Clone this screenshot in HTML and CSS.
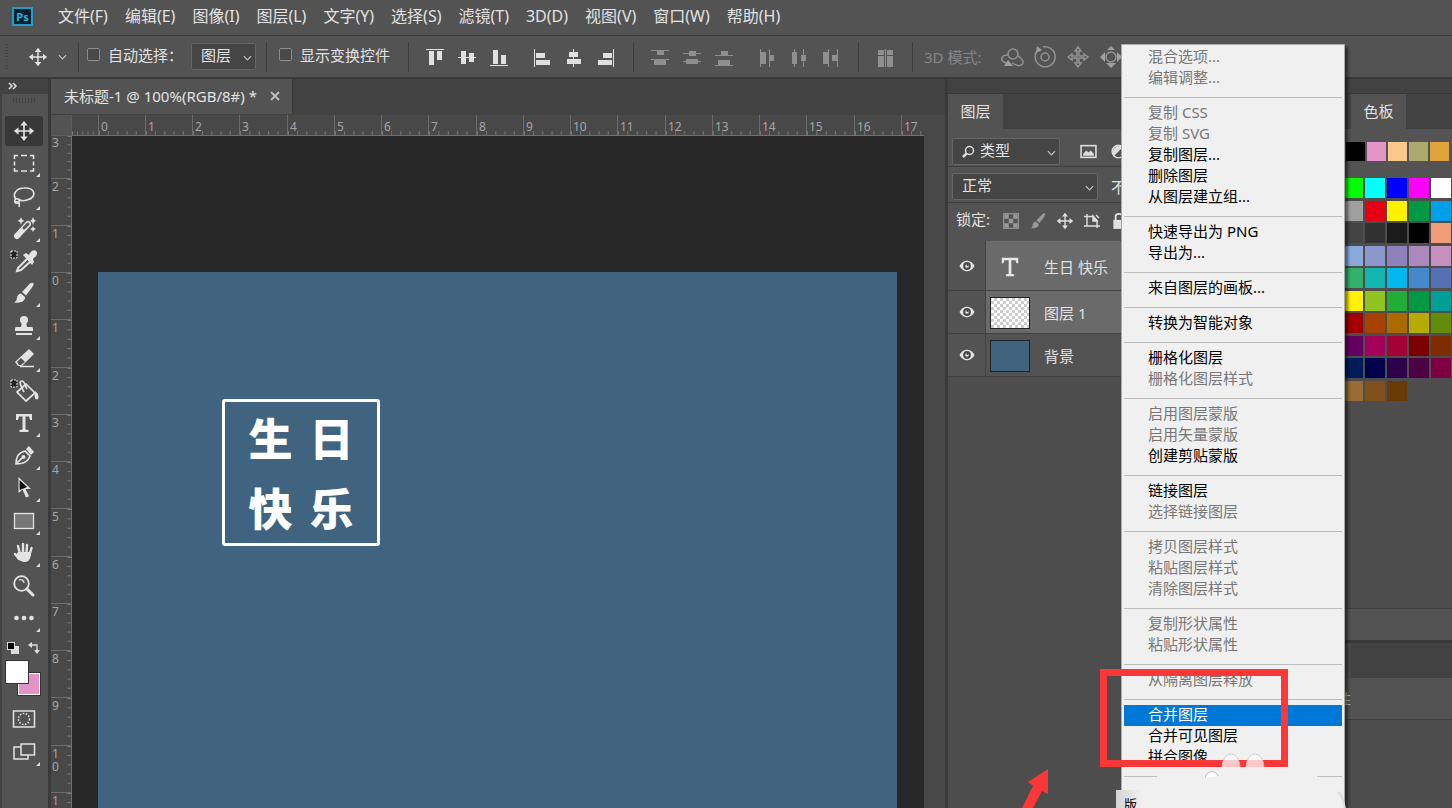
FILE: index.html
```html
<!DOCTYPE html>
<html lang="zh-CN">
<head>
<meta charset="utf-8">
<title>未标题-1</title>
<link rel="stylesheet" href="styles.css">
</head>
<body>
<svg class="defs" aria-hidden="true">
  <symbol id="move" viewBox="0 0 24 24"><path d="M12 4v16M4 12h16" stroke="currentColor" stroke-width="1.800"/><path d="M12 1l4 5h-8zM12 23l4-5h-8zM1 12l5-4v8zM23 12l-5-4v8z" fill="currentColor"/></symbol>
  <symbol id="chev" viewBox="0 0 10 6"><path d="M1 1l4 4 4-4" fill="none" stroke="currentColor" stroke-width="1.300"/></symbol>
  <symbol id="eye" viewBox="0 0 16 12"><path d="M.5 6C3 1.500 6 .8 8 .8s5 .7 7.500 5.200C13 10.500 10 11.200 8 11.200S3 10.500.5 6z" fill="#e6e6e6"/><circle cx="8" cy="6" r="3.900" fill="#4a4a4a"/><circle cx="8" cy="6" r="1.800" fill="#e6e6e6"/><circle cx="8.500" cy="5" r="1" fill="#333"/></symbol>
  <symbol id="brush" viewBox="0 0 24 24"><path d="M21 2c1.500 1 0 3-1 4.500l-6 8-4-3.500 7-7.500c1.200-1.200 3-2.300 4-1.500z" fill="currentColor"/><path d="M9 12.500l4 3.500c.5 4-4 6.500-11 5.500 3-1.500 2.500-3 3-5 .5-2 2-4 4-4z" fill="currentColor"/></symbol>
</svg>
<div class="app">
  <header class="menubar">
    <div class="logo">Ps</div>
    <nav class="menus" aria-label="主菜单">
      <button>文件(F)</button><button>编辑(E)</button><button>图像(I)</button><button>图层(L)</button><button>文字(Y)</button><button>选择(S)</button><button>滤镜(T)</button><button>3D(D)</button><button>视图(V)</button><button>窗口(W)</button><button>帮助(H)</button>
    </nav>
  </header>

  <div class="options">
    <span class="grip-v"></span>
    <button class="preset" aria-label="移动工具"><svg class="i20"><use href="#move"/></svg><svg class="chev"><use href="#chev"/></svg></button>
    <span class="divider"></span>
    <label class="check auto"><input type="checkbox">自动选择：</label>
    <span class="pick pick-small"><select aria-label="自动选择"><option>图层</option></select><svg class="chev"><use href="#chev"/></svg></span>
    <span class="divider"></span>
    <label class="check"><input type="checkbox">显示变换控件</label>
    <span class="divider"></span>
    <div class="aligns">
      <button aria-label="顶对齐"><svg viewBox="0 0 18 18"><path d="M0 0h18v1H0zM3 2h5v14H3zM11 2h5v9h-5z"/></svg></button>
      <button aria-label="垂直居中对齐"><svg viewBox="0 0 18 18"><path d="M0 8h18v1H0zM3 2h5v13H3zM11 4h5v9h-5z"/></svg></button>
      <button aria-label="底对齐"><svg viewBox="0 0 18 18"><path d="M0 16h18v1H0zM3 1h5v14H3zM11 6h5v9h-5z"/></svg></button>
    </div>
    <div class="aligns">
      <button aria-label="左对齐"><svg viewBox="0 0 18 18"><path d="M1 0h1v18H1zM3 4h9v5H3zM3 11h14v5H3z"/></svg></button>
      <button aria-label="水平居中对齐"><svg viewBox="0 0 18 18"><path d="M8 0h1v18H8zM4 3h9v5H4zM2 10h14v5H2z"/></svg></button>
      <button aria-label="右对齐"><svg viewBox="0 0 18 18"><path d="M16 0h1v18h-1zM6 4h9v5H6zM1 11h14v5H1z"/></svg></button>
    </div>
    <span class="divider"></span>
    <div class="aligns dim">
      <button aria-label="按顶分布"><svg viewBox="0 0 18 18"><path d="M0 1h18v1H0zM0 10h18v1H0zM6 2h7v4H6zM3 11h12v5H3z"/></svg></button>
      <button aria-label="垂直居中分布"><svg viewBox="0 0 18 18"><path d="M0 4h18v1H0zM0 12h18v1H0zM6 2h7v5H6zM3 10h12v5H3z"/></svg></button>
      <button aria-label="按底分布"><svg viewBox="0 0 18 18"><path d="M0 6h18v1H0zM0 16h18v1H0zM6 2h7v5H6zM3 11h12v5H3z"/></svg></button>
    </div>
    <div class="aligns dim">
      <button aria-label="按左分布"><svg viewBox="0 0 18 18"><path d="M2 0h1v18H2zM11 0h1v18h-1zM3 3h5v12H3zM12 6h4v6h-4z"/></svg></button>
      <button aria-label="水平居中分布"><svg viewBox="0 0 18 18"><path d="M4 0h1v18H4zM13 0h1v18h-1zM2 3h5v12H2zM11 6h5v6h-5z"/></svg></button>
      <button aria-label="按右分布"><svg viewBox="0 0 18 18"><path d="M6 0h1v18H6zM15 0h1v18h-1zM1 3h5v12H1zM10 6h5v6h-5z"/></svg></button>
    </div>
    <span class="divider"></span>
    <div class="aligns dim">
      <button aria-label="自动对齐"><svg viewBox="0 0 18 18"><path d="M2 1h6v5H2zM2 7h6v11H2zM9 0h1v18H9zM11 1h6v5h-6zM11 7h6v11h-6z"/></svg></button>
    </div>
    <span class="divider"></span>
    <span class="mode">3D 模式:</span>
    <div class="modes">
      <button aria-label="旋转"><svg viewBox="0 0 24 24"><circle cx="13" cy="9" r="5"/><path d="M8 10c-8 0-8 6-2 8M12 18c6 4 12 3 11-2-1-2-3-4-5-5"/><path class="f" d="M4 21l4-6 5 6z"/></svg></button>
      <button aria-label="滚动"><svg viewBox="0 0 24 24"><circle cx="12" cy="12" r="4"/><path d="M4 6a10 10 0 1 0 6-4"/><path class="f" d="M3 8l1-7 5 4z"/></svg></button>
      <button aria-label="拖动"><svg viewBox="0 0 24 24"><path d="M12 2l3 4h-2v5h5V9l4 3-4 3v-2h-5v5h2l-3 4-3-4h2v-5H6v2l-4-3 4-3v2h5V6H9z"/></svg></button>
      <button aria-label="滑动"><svg viewBox="0 0 24 24"><circle cx="12" cy="12" r="5"/><path class="f" d="M12 1l4 4H8zM12 23l5-5H7zM1 12l5-5v10zM23 12l-5-5v10z"/></svg></button>
    </div>
  </div>

  <main class="work">
    <aside class="tools">
      <div class="tools-head"><svg viewBox="0 0 10 8"><path d="M1 1l3 3-3 3M5 1l3 3-3 3" fill="none" stroke="#ddd" stroke-width="1.600"/></svg></div>
      <div class="grip-h"></div>
      <div class="tool-list">
        <button class="tool on" aria-label="移动"><svg><use href="#move"/></svg></button>
        <button class="tool more" aria-label="矩形选框"><svg viewBox="0 0 24 24"><path d="M2.500 8V4.500H6M9 4.500h6M18 4.500h3.500V8M21.500 10.500v4M21.500 17v3H18M15 20H9M6 20H2.500v-3M2.500 14.500v-4" fill="none" stroke="currentColor" stroke-width="1.600"/></svg></button>
        <button class="tool more" aria-label="套索"><svg viewBox="0 0 24 24" fill="none" stroke="currentColor" stroke-width="1.600"><path d="M4 15C0 11 4 4 12 4c12-1 13 10 3 12-3 1-6 1-8-.5"/><circle cx="5" cy="17" r="2.300"/><path d="M3 18c4-1 5 1 4 5"/></svg></button>
        <button class="tool more" aria-label="魔棒"><svg viewBox="0 0 24 24"><path d="M5 20L16 8" stroke="currentColor" stroke-width="6" stroke-linecap="round"/><path d="M12 12l4-4" stroke="#535353" stroke-width="3" stroke-linecap="round"/><path d="M9 1l1 2.500L12.500 5 10 6 9 9 8 6 5.500 5 8 3.500zM21 1l1 2.500L24 5l-2 1-1 3-1-3-2-1 2-1.500zM21 10l1 2 2 1-2 1-1 2-1-2-2-1 2-1z" fill="currentColor"/></svg></button>
        <button class="tool wide" aria-label="吸管"><svg viewBox="0 0 30 24"><path d="M2 2h6v7H2z" fill="#222" stroke="currentColor" stroke-dasharray="2 1"/><path d="M19 9L9 19l-1 3 4-1 10-9" fill="none" stroke="currentColor" stroke-width="2"/><path d="M14 6l3-2 3 2c2-6 8-6 8-2s-3 4-4 6l1 3-2 3z" fill="currentColor"/></svg></button>
        <button class="tool more" aria-label="画笔"><svg><use href="#brush"/></svg></button>
        <button class="tool more" aria-label="仿制图章"><svg viewBox="0 0 24 24" fill="currentColor"><circle cx="12" cy="6" r="4"/><path d="M10 8h4l1 5h5c1 0 1 1 1 4H3c0-3 0-4 1-4h5zM4 19h16v2H4z"/></svg></button>
        <button class="tool more" aria-label="橡皮擦"><svg viewBox="0 0 24 24"><path d="M3 16L17 3l5 5-12 12H6z" fill="currentColor"/><path d="M5 16l4-4 4 4-4 3H7z" fill="#535353"/><path d="M8 20.500h14" stroke="currentColor" stroke-width="1.500"/></svg></button>
        <button class="tool wide" aria-label="油漆桶"><svg viewBox="0 0 30 24"><path d="M2 1h6v7H2z" fill="#222" stroke="currentColor" stroke-dasharray="2 1"/><path d="M17 5l9 9-9 8-9-9zM15 13c-4-7-5-11-2-11s3 6 5 8" fill="none" stroke="currentColor" stroke-width="1.700"/><path d="M26 12c4 3 4 6 3 8-3 1-4-1-3-8z" fill="currentColor"/></svg></button>
        <button class="tool more" aria-label="文字"><svg viewBox="0 0 24 24"><path d="M4 3h16v6h-2l-1-3.500h-3.500v13l3 .5v2h-9v-2l3-.5v-13H7L6 9H4z" fill="currentColor"/></svg></button>
        <button class="tool more" aria-label="钢笔"><svg viewBox="0 0 24 24"><path d="M4 20c0-7 2-11 9-13l5 5c-2 6-6 8-14 8zM4 20l7-7" fill="none" stroke="currentColor" stroke-width="1.700"/><circle cx="11.500" cy="13" r="2" fill="currentColor"/><path d="M14 5l3-3 5 6-3 3z" fill="currentColor"/></svg></button>
        <button class="tool more" aria-label="路径选择"><svg viewBox="0 0 24 24"><path d="M6.500 1v16l4-3.500 3.500 8 3-1.200-3.500-7.300H19z" fill="currentColor"/><path d="M7.600 4v10l7.500-3z" fill="#111"/></svg></button>
        <button class="tool more" aria-label="矩形"><svg viewBox="0 0 24 24"><rect x="2.500" y="4.500" width="19" height="15" fill="#777" stroke="currentColor" stroke-width="1.300"/></svg></button>
        <button class="tool more" aria-label="抓手"><svg viewBox="0 0 24 24"><path d="M8 13L6 5M11 12V3M14.500 12l.5-8M17.500 14l2-7M7 18l-4-5" stroke="currentColor" stroke-width="2.400" stroke-linecap="round"/><path d="M6 11h13c0 6-2 10-6 10-4 0-7-2-9-7z" fill="currentColor"/></svg></button>
        <button class="tool" aria-label="缩放"><svg viewBox="0 0 24 24" fill="none" stroke="currentColor"><circle cx="9.500" cy="9.500" r="7.300" stroke-width="1.800"/><path d="M7 6c3-1 5 1 5 3" stroke-width="1.300"/><path d="M15 15l6 6" stroke-width="3" stroke-linecap="round"/></svg></button>
        <button class="tool more" aria-label="编辑工具栏"><svg viewBox="0 0 24 24" fill="currentColor"><circle cx="4.500" cy="12" r="2.300"/><circle cx="12" cy="12" r="2.300"/><circle cx="19.500" cy="12" r="2.300"/></svg></button>
      </div>
      <div class="mini">
        <button aria-label="默认颜色"><svg viewBox="0 0 14 14"><path d="M6 5h7v8H5V9h1z" fill="#ddd"/><rect x="1.500" y="1.500" width="7" height="7" fill="#000" stroke="#ddd"/></svg></button>
        <button aria-label="切换颜色"><svg viewBox="0 0 14 14"><path d="M3 4h7v7" fill="none" stroke="#ddd" stroke-width="1.300"/><path d="M1 4l4-3v6zM10 13l-3-4h6z" fill="#ddd"/></svg></button>
      </div>
      <div class="colors"><button class="bg" aria-label="背景色"></button><button class="fg" aria-label="前景色"></button></div>
      <button class="tool foot" aria-label="快速蒙版"><svg viewBox="0 0 24 24" fill="none" stroke="currentColor"><rect x="1.500" y="4" width="21" height="16" stroke-width="1.500"/><circle cx="12" cy="12" r="5.500" stroke-dasharray="1.500 1.500" stroke-width="1.500"/></svg></button>
      <button class="tool foot more" aria-label="屏幕模式"><svg viewBox="0 0 24 24" fill="none" stroke="currentColor" stroke-width="1.500"><path d="M9 7H2v12h14v-4"/><rect x="9" y="4" width="13.500" height="11"/></svg></button>
    </aside>

    <section class="doc">
      <div class="tabs"><div class="tab"><span>未标题-1 @ 100%(RGB/8#) *</span><button aria-label="关闭"><svg viewBox="0 0 10 10"><path d="M1 1l8 8M9 1L1 9" stroke="currentColor" stroke-width="2"/></svg></button></div></div>
      <div class="stage">
        <div class="corner"></div>
        <div class="ruler-x"><i></i><i>0</i><i>1</i><i>2</i><i>3</i><i>4</i><i>5</i><i>6</i><i>7</i><i>8</i><i>9</i><i>10</i><i>11</i><i>12</i><i>13</i><i>14</i><i>15</i><i>16</i><i>17</i></div>
        <div class="ruler-y"><i>3</i><i>2</i><i>1</i><i>0</i><i>1</i><i>2</i><i>3</i><i>4</i><i>5</i><i>6</i><i>7</i><i>8</i><i>9</i><i>1<br>0</i><i>1</i></div>
        <div class="pasteboard"><div class="artboard"><div class="stamp"><span>生</span><span>日</span><span>快</span><span>乐</span></div></div></div>
      </div>
    </section>

    <aside class="panels">
      <section class="layers">
        <div class="strip"></div>
        <div class="ptabs"><button class="ptab">图层</button></div>
        <div class="prow filter">
          <span class="pick pick-type"><svg class="lens" viewBox="0 0 14 14"><circle cx="8.500" cy="5.500" r="4" fill="none" stroke="#ddd" stroke-width="1.500"/><path d="M5.500 8.500L2 12" stroke="#ddd" stroke-width="2.500"/></svg><select aria-label="筛选类型"><option>类型</option></select><svg class="chev"><use href="#chev"/></svg></span>
          <button class="ic" aria-label="像素图层"><svg viewBox="0 0 16 14"><rect x="1" y="1.500" width="14" height="11" fill="none" stroke="#ddd" stroke-width="1.500"/><path d="M3 11V9l3-3 2 2 2-2 3 3v2z" fill="#ddd"/></svg></button>
          <button class="ic" aria-label="调整图层"><svg viewBox="0 0 16 14"><circle cx="8" cy="7" r="6" fill="none" stroke="#ddd" stroke-width="1.400"/><path d="M12.200 2.800a6 6 0 0 0-8.400 8.400z" fill="#ddd"/></svg></button>
        </div>
        <div class="prow blend">
          <span class="pick pick-blend"><select aria-label="混合模式"><option>正常</option></select><svg class="chev"><use href="#chev"/></svg></span>
          <span class="opacity">不透明度:</span>
        </div>
        <div class="lock"><span>锁定:</span>
          <button class="off" aria-label="锁定透明像素"><svg viewBox="0 0 16 16"><rect x="1.500" y="1.500" width="13" height="13" fill="none" stroke="currentColor"/><path d="M2 2h4v4H2zM10 2h4v4h-4zM6 6h4v4H6zM2 10h4v4H2zM10 10h4v4h-4z" fill="currentColor"/></svg></button>
          <button class="off" aria-label="锁定图像像素"><svg><use href="#brush"/></svg></button>
          <button aria-label="锁定位置"><svg><use href="#move"/></svg></button>
          <button aria-label="防止嵌套"><svg viewBox="0 0 18 16" fill="none" stroke="currentColor" stroke-width="1.400"><path d="M4 1v12M1 3.500h9l4 4V13M1 13h16M14 9v6M13 2l3 3"/><path d="M10 3v5h4z" fill="currentColor"/></svg></button>
          <button aria-label="锁定全部"><svg viewBox="0 0 16 16"><path d="M5 7V4c0-3 6-3 6 0v3" fill="none" stroke="currentColor" stroke-width="1.600"/><path d="M3 7h10v8H3z" fill="currentColor"/></svg></button>
        </div>
        <ul class="layer-list">
          <li class="layer tall sel"><button class="vis" aria-label="可见性"><svg><use href="#eye"/></svg></button><div class="body"><svg class="tee" viewBox="0 0 24 24"><path d="M3 2h18v6h-2l-1-3.500h-4.500v15l3 .5v2h-9v-2l3-.5v-15H6L5 8H3z" fill="#e6e6e6"/></svg><span>生日 快乐</span></div></li>
          <li class="layer sel"><button class="vis" aria-label="可见性"><svg><use href="#eye"/></svg></button><div class="body"><span class="thumb checker"></span><span>图层 1</span></div></li>
          <li class="layer"><button class="vis" aria-label="可见性"><svg><use href="#eye"/></svg></button><div class="body"><span class="thumb fill"></span><span>背景</span></div></li>
        </ul>
      </section>
      <section class="side">
        <div class="strip"></div>
        <div class="ptabs shift"><button class="ptab">色板</button></div>
        <div class="recent">
          <b style="background:#000"></b><b style="background:#e493c5"></b><b style="background:#fdc88b"></b><b style="background:#abab70"></b><b style="background:#e0a33e"></b>
        </div>
        <div class="swatches">
          <b style="background:#00ff00"></b><b style="background:#00ffff"></b><b style="background:#0000ff"></b><b style="background:#ff00ff"></b><b style="background:#fff"></b>
          <b style="background:#a0a0a0"></b><b style="background:#e60012"></b><b style="background:#fff100"></b><b style="background:#009944"></b><b style="background:#00a0e9"></b>
          <b style="background:#444"></b><b style="background:#313131"></b><b style="background:#1b1b1b"></b><b style="background:#000"></b><b style="background:#f19c79"></b>
          <b style="background:#88abda"></b><b style="background:#8c97cb"></b><b style="background:#8f82bc"></b><b style="background:#aa89bd"></b><b style="background:#c490bf"></b>
          <b style="background:#32b16c"></b><b style="background:#13b5b1"></b><b style="background:#00b7ee"></b><b style="background:#448aca"></b><b style="background:#556fb5"></b>
          <b style="background:#fff100"></b><b style="background:#8fc31f"></b><b style="background:#22ac38"></b><b style="background:#009944"></b><b style="background:#009e96"></b>
          <b style="background:#a40000"></b><b style="background:#a84200"></b><b style="background:#ac6a00"></b><b style="background:#b7aa00"></b><b style="background:#638c0b"></b>
          <b style="background:#64005f"></b><b style="background:#a4005b"></b><b style="background:#a40035"></b><b style="background:#7d0000"></b><b style="background:#7f2d00"></b>
          <b style="background:#001c58"></b><b style="background:#00004c"></b><b style="background:#2e004b"></b><b style="background:#4c0045"></b><b style="background:#7e0043"></b>
          <b style="background:#996c33"></b><b style="background:#81511c"></b><b style="background:#6a3906"></b>
        </div>
        <div class="side-foot"></div>
        <div class="ptabs props"></div>
        <div class="prop-title"><span>性</span></div>
      </section>
    </aside>
  </main>

  <div class="context" role="menu">
    <div class="group"><button disabled>混合选项...</button><button disabled>编辑调整...</button></div>
    <div class="group"><button disabled>复制 CSS</button><button disabled>复制 SVG</button><button>复制图层...</button><button>删除图层</button><button>从图层建立组...</button></div>
    <div class="group"><button>快速导出为 PNG</button><button>导出为...</button></div>
    <div class="group"><button>来自图层的画板...</button></div>
    <div class="group"><button>转换为智能对象</button></div>
    <div class="group"><button>栅格化图层</button><button disabled>栅格化图层样式</button></div>
    <div class="group"><button disabled>启用图层蒙版</button><button disabled>启用矢量蒙版</button><button>创建剪贴蒙版</button></div>
    <div class="group"><button>链接图层</button><button disabled>选择链接图层</button></div>
    <div class="group"><button disabled>拷贝图层样式</button><button disabled>粘贴图层样式</button><button disabled>清除图层样式</button></div>
    <div class="group"><button disabled>复制形状属性</button><button disabled>粘贴形状属性</button></div>
    <div class="group"><button disabled>从隔离图层释放</button></div>
    <div class="group"><button class="active">合并图层</button><button>合并可见图层</button><button>拼合图像</button></div>
    <div class="group last"></div>
  </div>
  <div class="note">版</div>
  <div class="marker"></div>
  <svg class="arrow" viewBox="0 0 28 40" aria-hidden="true"><path d="M27 1L7 14l5 4L1 40h11l9-17 6 3z" fill="#fb3838"/></svg>
  <svg class="paw" viewBox="0 0 210 56" aria-hidden="true"><g fill="#fff" fill-opacity=".72" stroke="#bbb" stroke-opacity=".7"><ellipse cx="81" cy="15" rx="9" ry="13"/><ellipse cx="105" cy="15" rx="9" ry="13"/></g><path d="M7 23h48l17-8h42l9 8 4 1 3-1h37v6H7z" fill="#f0f0f0"/><path d="M55 26c2-8 11-8 13-2" fill="#fff" stroke="#bbb"/><path d="M188 40c5 2 5 10 7 16" fill="none" stroke="#ddd" stroke-width="2"/></svg>
</div>
</body>
</html>
```
FILE: styles.css
```css
* { box-sizing: border-box; }
body { margin: 0; background: #535353; color: #e2e2e2; font: 15px/20px "Noto Sans", "Noto Sans CJK SC", sans-serif; }
button, select { font: inherit; color: inherit; background: none; border: 0; padding: 0; margin: 0; }
ul { list-style: none; margin: 0; padding: 0; }
svg { display: block; }
.defs { display: none; }
.app { position: relative; display: flex; flex-direction: column; height: 100vh; overflow: hidden; }

.menubar { display: flex; align-items: center; flex: none; height: 36px; padding: 0 12px 3px; border-bottom: 1px solid #3c3c3c; }
.logo { width: 21px; height: 19px; border: 2px solid #1c9fcb; background: #04202e; color: #27b7ea; font: bold 11px/15px "Noto Sans", sans-serif; text-align: center; }
.menus { display: flex; gap: 17px; margin-left: 25px; font-size: 16px; white-space: nowrap; }

.options { display: flex; align-items: center; flex: none; height: 43px; border-bottom: 2px solid #393939; white-space: nowrap; }
.grip-v { width: 3px; height: 26px; margin-left: 5px; background: repeating-linear-gradient(#444 0 1px, transparent 1px 3px); }
.preset { display: flex; align-items: center; gap: 10px; margin-left: 20px; width: 50px; }
.i20 { width: 20px; height: 20px; }
.chev { width: 9px; height: 6px; color: #c4c4c4; flex: none; }
.divider { width: 1px; height: 30px; background: #3d3d3d; flex: none; }
.check { display: flex; align-items: center; gap: 8px; margin: 0 18px 4px 12px; }
.check.auto { margin: 0 8px 4px; width: 96px; }
.check input { appearance: none; width: 13px; height: 13px; margin: 0; border: 1px solid #8b8b8b; border-radius: 2px; background: #484848; }
.pick { position: relative; display: flex; align-items: center; background: #454545; border: 1px solid #666; border-radius: 2px; }
.pick select { appearance: none; width: 100%; height: 100%; padding: 0 9px 3px; outline: 0; }
.pick .chev { position: absolute; right: 3px; top: 11px; pointer-events: none; }
.pick-small { width: 65px; height: 27px; margin-right: 10px; }
.aligns { display: flex; gap: 14px; margin: 2px 0 0 17px; }
.aligns + .aligns { margin-left: 25px; }
.aligns + .divider { margin-left: 18px; }
.aligns svg { width: 18px; height: 18px; fill: #e0e0e0; }
.dim svg { fill: #8f8f8f; }
.mode { margin-left: 11px; color: #858585; }
.modes { display: flex; gap: 9px; margin-left: 19px; }
.modes svg { width: 24px; height: 24px; fill: none; stroke: #929292; stroke-width: 1.5; }
.modes .f { fill: #a0a0a0; stroke: none; }

.work { display: flex; flex: 1; min-height: 0; }
.tools { display: flex; flex-direction: column; flex: none; width: 51px; border-left: 2px solid #424242; border-right: 3px solid #3a3a3a; overflow: hidden; }
.tools-head { flex: none; height: 15px; padding: 3px 0 0 6px; background: #424242; }
.tools-head svg { width: 10px; height: 8px; }
.grip-h { flex: none; width: 23px; height: 5px; margin: 4px 0 13px 11px; background: repeating-linear-gradient(90deg, #414141 0 1px, transparent 1px 3px); }
.tool-list { display: grid; flex: none; grid-auto-rows: 32px 33px; }
.tool { position: relative; display: grid; place-items: center; width: 38px; height: 30px; margin-left: 3px; color: #e3e3e3; }
.tool svg { width: 24px; height: 24px; }
.tool.wide svg { width: 30px; }
.tool.on { background: #383838; border-radius: 2px; }
.tool.on svg { width: 22px; height: 22px; }
.more::after { content: ""; position: absolute; right: 3px; bottom: 1px; border: 2px solid transparent; border-right-color: #ddd; border-bottom-color: #ddd; }
.mini { display: flex; gap: 7px; flex: none; margin: 5px 0 5px 4px; }
.mini svg { width: 14px; height: 14px; }
.colors { position: relative; flex: none; width: 36px; height: 36px; margin: 0 0 8px 3px; }
.colors button { position: absolute; width: 24px; height: 24px; border: 1px solid #333; }
.colors .fg { left: 0; top: 0; background: #fff; }
.colors .bg { right: 0; bottom: 0; background: #e493c5; box-shadow: inset 0 0 0 1px #fff; }
.tool.foot { flex: none; margin-bottom: 3px; }

.doc { display: flex; flex-direction: column; flex: 1; min-width: 0; }
.tabs { flex: none; height: 36px; background: #424242; }
.tab { display: flex; align-items: center; justify-content: space-between; width: 242px; height: 35px; padding: 0 12px 2px 13px; background: #535353; border-right: 1px solid #3a3a3a; white-space: nowrap; }
.tab svg { width: 10px; height: 10px; color: #bbb; }
.stage { display: grid; flex: 1; min-height: 0; grid-template: 21px minmax(0, 1fr) / 21px minmax(0, 1fr) 21px; background: #484848; }
.corner { background: #535353; border-right: 1px solid #5c5c5c; border-bottom: 1px solid #5c5c5c; }
.ruler-x { display: grid; grid-auto-flow: column; grid-template-columns: 26px; grid-auto-columns: 47px 47px 47px 48px; overflow: hidden; border-bottom: 1px solid #707070; }
.stage i { font-style: normal; font-size: 12px; line-height: 13px; color: #a5a5a5; }
.ruler-x i { padding: 5px 0 0 2px; border-left: 1px solid #6c6c6c; background: linear-gradient(90deg, #777 1px, transparent 1px) 0 100% / 20% 4px repeat-x; }
.ruler-x i:first-child { border-left: 0; }
.ruler-y { display: grid; grid-area: 2 / 1; grid-template-rows: 42px; grid-auto-rows: 47px 47px 47px 48px; overflow: hidden; border-right: 1px solid #707070; }
.ruler-y i { padding: 1px 0 0 1px; border-top: 1px solid #6c6c6c; background: linear-gradient(#777 1px, transparent 1px) 100% 0 / 4px 20% repeat-y; }
.ruler-y i:first-child { border-top: 0; padding-top: 0; }
.pasteboard { grid-area: 2 / 2; display: flex; min-width: 0; padding: 136px 27px 0 26px; background: #282828; overflow: hidden; }
.artboard { flex: 1; padding: 127px 0 0 124px; background: #40637f; }
.stamp { display: grid; grid-template: 70px 70px / 61px 61px; place-items: center; width: 158px; height: 147px; padding: 0 15px; border: 3px solid #fff; border-radius: 3px; color: #fff; font: 900 44px/60px "Noto Sans CJK SC", sans-serif; }

.panels { display: grid; grid-template-columns: 395px 1fr; flex: none; width: 507px; border-left: 3px solid #393939; background: #4d4d4d; overflow: hidden; }
.strip { height: 15px; background: #424242; border-bottom: 1px solid #383838; }
.ptabs { display: flex; height: 35px; background: #424242; }
.ptab { width: 55px; padding-bottom: 2px; background: #535353; }
.shift { padding-left: 8px; }
.prow { display: flex; align-items: center; height: 38px; padding: 7px 4px 0; background: #535353; border-bottom: 1px solid #3e3e3e; }
.blend { height: 36px; padding-top: 4px; }
.pick-type { width: 108px; height: 27px; margin-right: 20px; }
.pick-type .lens { position: absolute; left: 8px; top: 6px; width: 14px; height: 14px; }
.pick-type select { padding-left: 27px; }
.pick-blend { width: 146px; height: 27px; margin-right: 13px; }
.ic { margin-right: 13px; }
.ic svg { width: 17px; height: 15px; }
.lock { display: flex; align-items: center; gap: 9px; height: 38px; padding: 0 0 3px 8px; background: #535353; }
.lock span { width: 37px; margin-bottom: 4px; white-space: nowrap; }
.lock svg { width: 18px; height: 18px; color: #e0e0e0; }
.lock .off svg { color: #989898; }
.layer { display: flex; height: 43px; background: #535353; border-bottom: 1px solid #424242; }
.tall { height: 50px; }
.vis { display: grid; place-items: center; width: 38px; border-right: 1px solid #424242; }
.vis svg { width: 16px; height: 12px; }
.body { display: flex; align-items: center; gap: 14px; flex: 1; padding: 2px 0 0 4px; }
.sel .body { background: #6a6a6a; }
.tee { width: 22px; height: 22px; margin: 0 9px; }
.thumb { width: 40px; height: 32px; border: 1px solid #222; }
.checker { background: conic-gradient(#ccc 25%, #fff 0 50%, #ccc 0 75%, #fff 0) 0 0 / 6px 6px; }
.fill { background: #40637f; }
.side { display: flex; flex-direction: column; min-width: 0; overflow: hidden; }
.recent { display: flex; gap: 2px; flex: none; height: 49px; padding: 13px 0 0 3px; background: #535353; }
.recent b { width: 19px; height: 19px; flex: none; }
.swatches { display: grid; align-content: start; flex: none; grid-template-columns: repeat(5, 22px); grid-auto-rows: 23px 22px; height: 430px; }
.swatches b { width: 20px; height: 20px; }
.side-foot { flex: none; height: 35px; background: #535353; border-top: 1px solid #3e3e3e; border-bottom: 3px solid #393939; }
.props { flex: none; margin-left: 8px; }
.prop-title { display: flex; flex: none; height: 42px; padding-top: 11px; font-size: 14px; color: #bbb; background: #535353; border-bottom: 1px solid #3e3e3e; }
.prop-title span { display: flex; justify-content: flex-end; width: 8px; }

.context { position: absolute; right: 107px; top: 44px; width: 224px; padding: 2px; background: #f0f0f0; border: 1px solid #aaa; color: #000; box-shadow: 3px 3px 3px rgba(0,0,0,.5); }
.group { display: grid; grid-auto-rows: 21px; }
.group + .group::before { content: ""; height: 1px; margin-top: 8px; background: #bdbdbd; }
.group + .group { grid-template-rows: 14px; }
.group button { padding: 0 0 2px 24px; text-align: left; line-height: 19px; white-space: nowrap; }
.group button:disabled { color: #777; }
.group .active { background: #0078d7; color: #fff; }
.last { height: 50px; }
.marker { position: absolute; right: 164px; top: 669px; width: 188px; height: 98px; border: 7px solid #fb3838; }
.arrow { position: absolute; right: 403px; bottom: 0; width: 28px; height: 40px; }
.paw { position: absolute; right: 92px; bottom: 0; width: 210px; height: 56px; }
.note { position: absolute; right: 310px; bottom: 0; width: 26px; height: 18px; padding: 4px 0 0 8px; overflow: hidden; background: linear-gradient(90deg, #d4d4d4, #f0f0f0); color: #000; font-size: 13px; }
```
